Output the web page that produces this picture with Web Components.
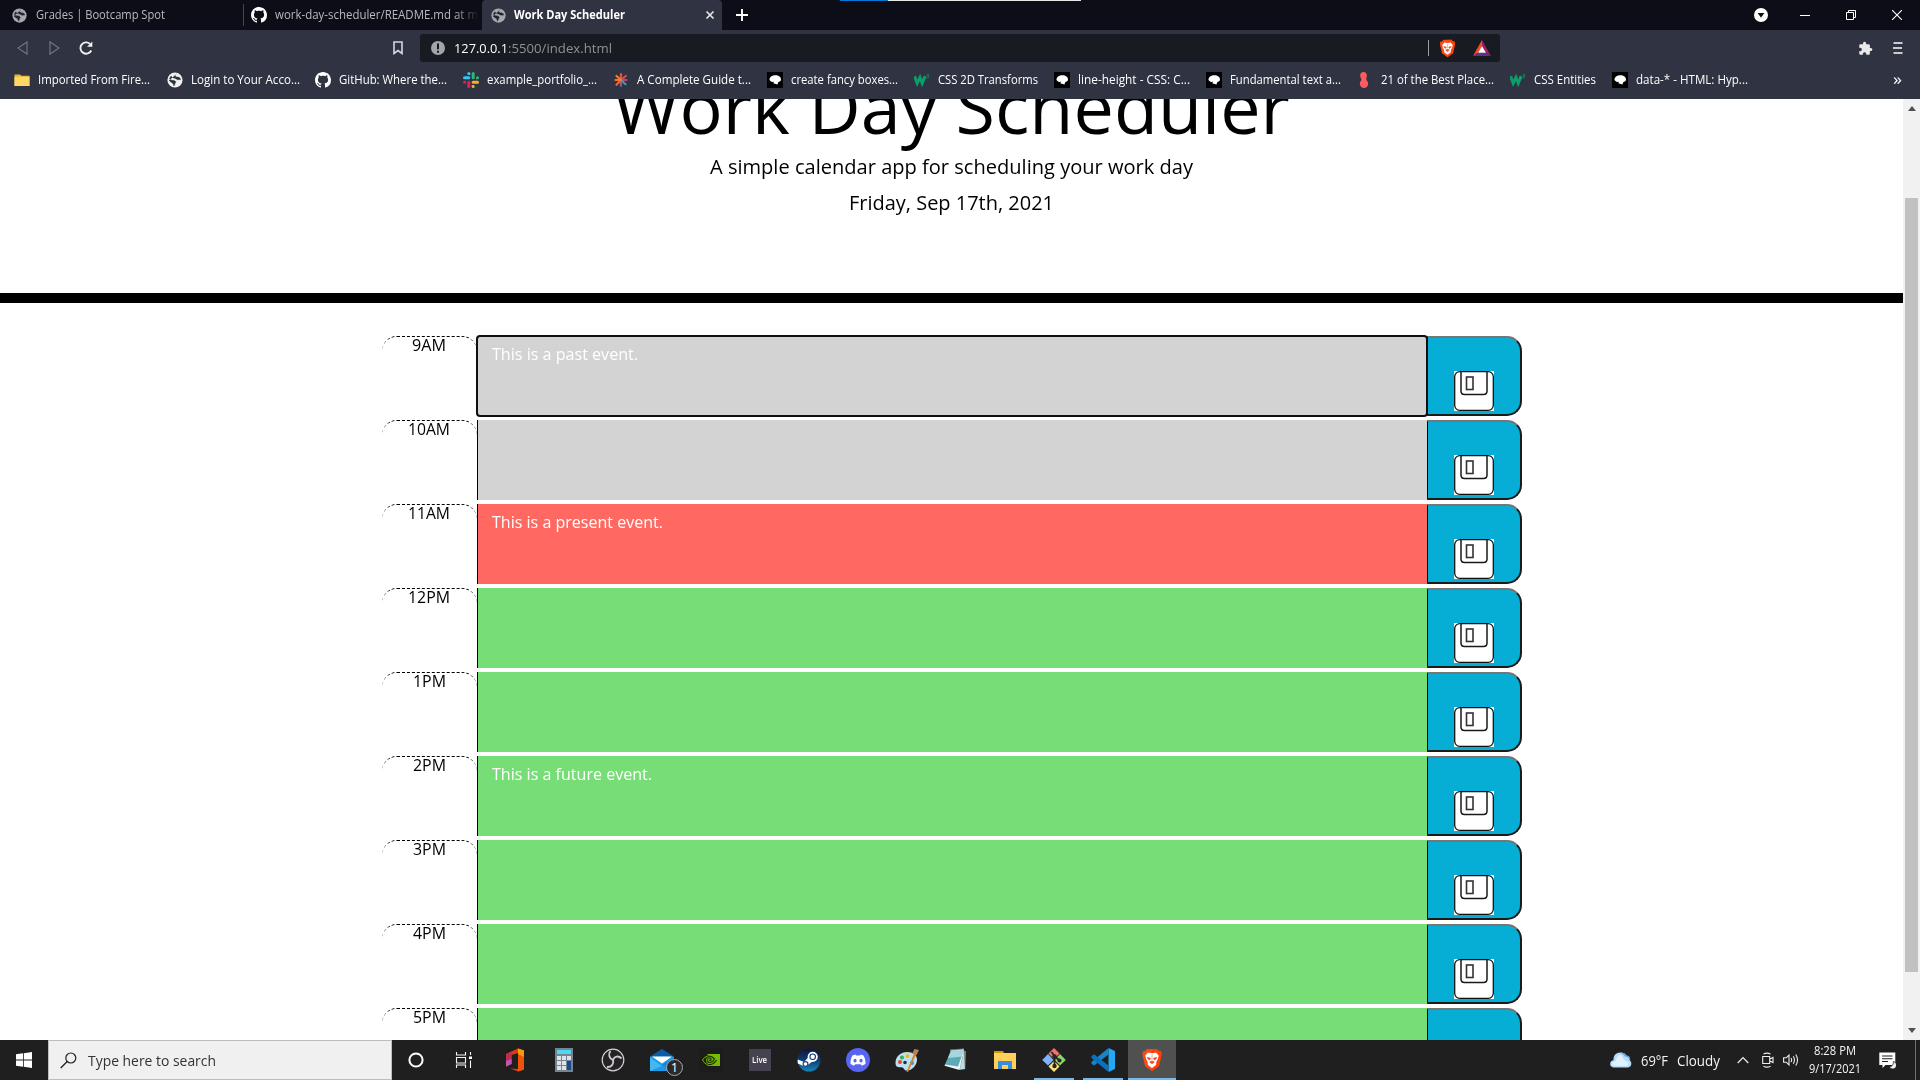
<!DOCTYPE html>
<html lang="en">
<head>
<meta charset="utf-8">
<title>Work Day Scheduler</title>
<style>
html,body{margin:0;padding:0}
body{width:1920px;height:1080px;overflow:hidden;font-family:"Open Sans","Noto Sans",sans-serif;background:#fff}
</style>
</head>
<body>
<desktop-screen></desktop-screen>
<script>
const GLOBE = (c,d) => `<svg viewBox="0 0 16 16"><circle cx="8" cy="8" r="7.600" fill="${c}"/><path d="M9.500 2C8 3.200 7.800 3.600 8.600 4.500c1 .8 3 .3 4.400 1.500l.6 1.500-3 .2C9 6.500 7 6 5.500 5.500L4 4 2.500 6.500l1 1.500 3.500.5c1.800.5 2.300 1.500 1.200 2.700L7 14l-1-2.500L3.500 9.800 2 8.500" fill="${d}" stroke="${d}" stroke-width=".4"/></svg>`;
const LION = `<svg viewBox="0 0 20 24"><path d="M5 1h10l2 2 2.200.2.300 3.800-2.500 11L10 23 3 18 .5 7l.4-3.800L3 3z" fill="#fb4a16"/><path d="M10 1h5l2 2 2.200.2.300 3.800-2.500 11L10 23z" fill="#ff3b00" opacity=".6"/><path d="M6 4.500l4 .7 4-.7 2.700 3-1 4-1.200 2-.5 3.500L10 20l-4-3-.5-3.500-1.200-2-1-4z" fill="#fff"/><path d="M5.200 9.300l3.300.8-.5 1.800-2-.7zM14.800 9.300l-3.300.8.5 1.800 2-.7zM7.500 14l2.500-1.300 2.500 1.300-2.500 2zM10 6v5.500" fill="#f0502a" stroke="#f0502a" stroke-width=".5"/></svg>`;
const ICONS = {
 globeLight: GLOBE('#f1f1f1','#2b2d39'), globeDim: GLOBE('#a6a8b0','#20222c'),
 lion: LION,
 github: `<svg viewBox="0 0 16 16"><path fill="#fff" d="M8 0C3.580 0 0 3.580 0 8c0 3.540 2.290 6.530 5.470 7.590.4.070.55-.17.55-.38 0-.19-.01-.82-.01-1.490-2.010.37-2.530-.49-2.690-.94-.09-.23-.48-.94-.82-1.130-.28-.15-.68-.52-.01-.53.630-.01 1.080.58 1.230.82.720 1.210 1.870.87 2.330.66.070-.52.280-.87.510-1.070-1.780-.2-3.640-.89-3.640-3.950 0-.87.310-1.590.82-2.150-.08-.2-.36-1.020.08-2.120 0 0 .67-.21 2.200.82.640-.18 1.320-.27 2-.27s1.360.09 2 .27c1.530-1.040 2.200-.82 2.200-.82.440 1.100.16 1.920.08 2.120.51.560.82 1.270.82 2.150 0 3.070-1.870 3.750-3.650 3.950.29.250.54.730.54 1.480 0 1.070-.01 1.930-.01 2.200 0 .21.150.46.550.38A8.010 8.010 0 0 0 16 8c0-4.420-3.580-8-8-8z"/></svg>`,
 close: `<svg viewBox="0 0 10 10"><path d="M1.500 1.500l7 7M8.500 1.500l-7 7" stroke="#e6e6e6" stroke-width="1.700"/></svg>`,
 plus: `<svg viewBox="0 0 12 12"><path d="M6 0v12M0 6h12" stroke="#fff" stroke-width="1.900"/></svg>`,
 down: `<svg viewBox="0 0 14 14"><circle cx="7" cy="7" r="7" fill="#fff"/><path d="M3.700 5h6.600L7 9.700z" fill="#0c0d16"/></svg>`,
 min: `<svg viewBox="0 0 10 10"><path d="M0 5.500h10" stroke="#fff"/></svg>`,
 restore: `<svg viewBox="0 0 10 10"><path d="M.5 2.500h7v7h-7zM2.500 2.500v-2h7v7h-2" fill="none" stroke="#fff"/></svg>`,
 wclose: `<svg viewBox="0 0 10 10"><path d="M0 0l10 10M10 0L0 10" stroke="#fff" stroke-width="1.100"/></svg>`,
 back: `<svg viewBox="0 0 11 14"><path d="M10 .9v12.200L1 7z" fill="none" stroke="#70727d" stroke-width="1.200"/></svg>`,
 fwd: `<svg viewBox="0 0 11 14"><path d="M1 .9v12.200L10 7z" fill="none" stroke="#70727d" stroke-width="1.200"/></svg>`,
 reload: `<svg viewBox="0 0 14 14"><path d="M12.300 9.500A5.700 5.700 0 1 1 11 2.800" fill="none" stroke="#f3f3f3" stroke-width="1.800"/><path d="M13.300.5v5.200H8.100z" fill="#f3f3f3"/></svg>`,
 mark: `<svg viewBox="0 0 10 14"><path d="M1 1h8v11.500L5 9.500l-4 3z" fill="none" stroke="#d6d7da" stroke-width="1.600"/></svg>`,
 info: `<svg viewBox="0 0 14 14"><circle cx="7" cy="7" r="7" fill="#a3a5aa"/><path d="M7 2.500v5.700M7 9.700v2" stroke="#171a21" stroke-width="2"/></svg>`,
 bat: `<svg viewBox="0 0 18 16"><path d="M9 0L0 16l5-3.200L9 6z" fill="#ff4724"/><path d="M9 0l9 16-5-3.200L9 6z" fill="#9e1f63"/><path d="M0 16h18l-5-3.200H5z" fill="#662d91"/><path d="M9 6l4 6.800H5z" fill="#fff"/></svg>`,
 puzzle: `<svg viewBox="0 0 24 24"><path fill="#e9e9eb" d="M20.500 11H19V7a2 2 0 0 0-2-2h-4V3.500a2.500 2.500 0 0 0-5 0V5H4a2 2 0 0 0-2 2v3.800h1.500a2.700 2.700 0 0 1 0 5.400H2V20a2 2 0 0 0 2 2h3.800v-1.500a2.700 2.700 0 0 1 5.400 0V22H17a2 2 0 0 0 2-2v-4h1.500a2.500 2.500 0 0 0 0-5z"/></svg>`,
 menu: `<svg viewBox="0 0 10 12"><path d="M.5 1h9M0 6h9M.5 11h9" stroke="#c9cacd" stroke-width="1.800"/></svg>`,
 folder: `<svg viewBox="0 0 16 16"><path d="M.5 2.500H6l1.500 1.300H15.500V14h-15z" fill="#eab431"/><path d="M.5 4.800h15V14h-15z" fill="#ffd766"/></svg>`,
 slack: `<svg viewBox="0 0 16 16"><g fill="#36c5f0"><rect x="0" y="4.300" width="7.300" height="3" rx="1.500"/><path d="M5.800 0a1.500 1.500 0 0 1 1.500 1.500V3H5.800a1.500 1.500 0 0 1 0-3z"/></g><g fill="#2eb67d"><rect x="8.700" y="0" width="3" height="7.300" rx="1.500"/><path d="M16 5.800a1.500 1.500 0 0 1-1.500 1.500H13V5.800a1.500 1.500 0 0 1 3 0z"/></g><g fill="#ecb22e"><rect x="8.700" y="8.700" width="7.300" height="3" rx="1.500"/><path d="M10.200 16a1.500 1.500 0 0 1-1.500-1.500V13h1.500a1.500 1.500 0 0 1 0 3z"/></g><g fill="#e01e5a"><rect x="4.300" y="8.700" width="3" height="7.300" rx="1.500"/><path d="M0 10.200a1.500 1.500 0 0 1 1.500-1.500H3v1.500a1.500 1.500 0 0 1-3 0z"/></g></svg>`,
 star: `<svg viewBox="0 0 16 16"><g stroke-width="2.200" stroke-linecap="round"><path d="M8 8V2.200" stroke="#e0524c"/><path d="M8 8l4.800-4" stroke="#d84a52"/><path d="M8 8h5.600" stroke="#b34a6a"/><path d="M8 8l4.500 4.300" stroke="#4d8fb8"/><path d="M8 8v5.800" stroke="#8b5c86"/><path d="M8 8l-4.500 4.800" stroke="#f1623b"/><path d="M8 8H2.500" stroke="#ff6d2a"/><path d="M8 8L3.500 4" stroke="#ff7a18"/></g></svg>`,
 mdn: `<svg viewBox="0 0 16 16"><path d="M0 0h16v16H0z" fill="#000"/><path d="M2.500 8C2.300 5 5 3.200 8.500 3.200c3.200 0 5.500 1.800 5.500 4.300 0 1.300-.8 2.200-2.200 2.300-.8.700-1 1.700-1.300 2.700L6.300 11.300 7 9.800l-2 .2-1.300-.8z" fill="#fff"/></svg>`,
 w3: `<svg viewBox="0 0 16 16"><path d="M.6 4.200l2.600 7L6 5.500l2.200 5.700 3-7" fill="none" stroke="#0b9e6b" stroke-width="3"/><path d="M12.600 2.800h2.200l-1.200 1.400c1.600.2 1.500 2-.9 1.700" fill="none" stroke="#0b9e6b" stroke-width=".8"/></svg>`,
 red: `<svg viewBox="0 0 16 16"><ellipse cx="6.500" cy="3.600" rx="3.300" ry="3.600" fill="#ff5a5f"/><path d="M4.300 4h5v5h-5z" fill="#ff5a5f"/><ellipse cx="7" cy="11.800" rx="4.200" ry="4.200" fill="#ff5a5f"/></svg>`,
 disk: `<svg viewBox="0 0 40 40"><path d="M0 0h40v40H0z" fill="#fff"/><rect x=".7" y=".7" width="38.600" height="38.600" rx="5" fill="#fff" stroke="#111" stroke-width="1.300"/><path d="M7 .8V20q0 3.500 3.500 3.500h19q3.500 0 3.500-3.500V.8" fill="none" stroke="#191919" stroke-width="1.500"/><rect x="12.500" y="6" width="6.500" height="12.500" fill="none" stroke="#333" stroke-width="1.600"/></svg>`,
 win: `<svg viewBox="0 0 16 16"><path d="M0 2.300l7-1V7.600H0zM7.800 1.200L16 0v7.600H7.800zM0 8.400h7v6.300l-7-1zM7.800 8.400H16V16l-8.200-1.200z" fill="#fff"/></svg>`,
 search: `<svg viewBox="0 0 17 17"><circle cx="10.800" cy="6" r="5" fill="none" stroke="#222" stroke-width="1.200"/><path d="M7.200 9.500L.7 16" stroke="#222" stroke-width="1.300"/></svg>`,
 cortana: `<svg viewBox="0 0 24 24"><circle cx="12" cy="12" r="6.600" fill="none" stroke="#fff" stroke-width="2"/></svg>`,
 tasks: `<svg viewBox="0 0 24 24"><path d="M4.500 4v3h9V4M4.500 20v-3h9v3M4.500 9.500h9v5.500h-9zM18.500 4v3M18.500 12.500V20" fill="none" stroke="#f5f5f5" stroke-width="1.100"/><path d="M17 8.500h3v2.500h-3z" fill="#fff"/></svg>`,
 office: `<svg viewBox="0 0 24 24"><path d="M15 .5l6 2v19l-6 2-8-3 8 .6V5L8.500 7v9L3 18.500V6z" fill="#e23a12"/><path d="M15 .5l6 2v19l-6 2z" fill="#ee5307"/><path d="M15 .5l6 2V9l-6-3z" fill="#f79a0a"/><path d="M3 6l5.500-2.500V16L3 18.500z" fill="#c22c4c"/><path d="M3 13l5.500-2v5L3 18.500z" fill="#b55ab8"/></svg>`,
 calc: `<svg viewBox="0 0 24 24"><path d="M3 0h18v24H3z" fill="#77838f"/><path d="M5 2h14v4H5z" fill="#4bd8f8"/><path d="M5 8h4v4H5zM10 8h4v4h-4zM15 8h4v4h-4zM5 13h4v4H5zM10 13h4v4h-4zM5 18h4v4H5zM10 18h4v4h-4z" fill="#dce2e8"/><path d="M15 13h4v9h-4z" fill="#134a8e"/></svg>`,
 obs: `<svg viewBox="0 0 24 24"><circle cx="12" cy="12" r="10.800" fill="#262326" stroke="#d0d0d0" stroke-width="1.200"/><path d="M9.500 3C7 6 8 10.500 12 12M12 12c1.500-4 5.500-4.500 8.500-1.500M12 12c1 4-1.500 7.500-6 7" fill="none" stroke="#c9c9c9" stroke-width="1.900"/></svg>`,
 mail: `<svg viewBox="0 0 24 24"><path d="M0 8.500L12 1l12 7.500z" fill="#0a5ca8"/><path d="M0 8.500h24V23H0z" fill="#1c9bea"/><path d="M2 8.500h20L12 15.500z" fill="#fff"/><path d="M0 9.500L12 18 0 23z" fill="#41b7f4"/><path d="M24 9.500L12 17l12 6z" fill="#1683d8"/></svg>`,
 nvidia: `<svg viewBox="0 0 24 24"><path d="M0 0h24v24H0z" fill="#1c1c1c"/><path d="M8.500 6H21v12H8.500z" fill="#76b900"/><path d="M3.500 11.800C6.500 7.500 12 6.800 15.500 11c-2 4-6.500 5-8 .8.8-2.300 3.500-2.800 4.800-.3-1 1.700-2 1.500-2.300.2M3.500 11.800c2.500 5.700 9.500 7 14 .4" fill="none" stroke="#203600" stroke-width="1.200"/><path d="M8.500 8.200c-2 .6-4 2-5 3.600 1 2.200 3 4.200 5 4.900M8.500 10c-2 1.500-.8 4.500 0 4.800" fill="none" stroke="#76b900"/></svg>`,
 steam: `<svg viewBox="0 0 24 24"><defs><linearGradient id="g" x2="0" y2="1"><stop stop-color="#10153c"/><stop offset=".5" stop-color="#0c3c72"/><stop offset="1" stop-color="#1785bb"/></linearGradient></defs><circle cx="12" cy="12" r="11.500" fill="url(#g)"/><path d="M.6 11.500l6.500 2.500 4.500-5 8 1-7.500 6-4 2.800L.8 15.500z" fill="#fff"/><circle cx="15.700" cy="8.800" r="4.200" fill="#12376c" stroke="#fff" stroke-width="1.800"/><circle cx="15.700" cy="8.800" r="2.200" fill="#fff"/><circle cx="8.500" cy="16" r="2.400" fill="#fff" stroke="#194d80" stroke-width="1.200"/></svg>`,
 discord: `<svg viewBox="0 0 24 24"><circle cx="12" cy="12" r="12" fill="#5865f2"/><path fill="#fff" fill-rule="evenodd" d="M9.500 6.500l.5 1h4l.5-1 3 1c1.500 2.500 2.200 5.500 2 8.500l-3.700 1.700-1-1.500h-5.600l-1 1.500L4.500 16c-.2-3 .5-6 2-8.500zM9 10.800a1.600 1.800 0 1 0 .1 0zM15 10.800a1.600 1.800 0 1 0 .1 0z"/></svg>`,
 paint: `<svg viewBox="0 0 24 24"><path d="M12 4c6 0 10 3 10 7.500 0 6-5 11-10 11-3.500 0-3-3.500-5.500-3.300C3 19.500.5 19 .5 15 .5 8 6 4 12 4z" fill="#bde0ef"/><circle cx="5" cy="14" r="2" fill="#e2453c"/><circle cx="7" cy="9.500" r="2" fill="#3aaa54"/><circle cx="12.500" cy="8" r="2" fill="#f2b41f"/><circle cx="10" cy="14.500" r="1.800" fill="#203145"/><circle cx="17" cy="15" r="2" fill="#3f8be0"/><path d="M19.500 4.500l2 1.300L13 24h-1.500z" fill="#d9822b"/><path d="M17.500 5l2-4 4.500 1-2.500 5z" fill="#b98356"/></svg>`,
 notes: `<svg viewBox="0 0 24 24"><path d="M19 2.500l3 .7-.8 18L18 21z" fill="#8d8672"/><path d="M7 2.500l13-1-3.500 20L.8 17z" fill="#5fa9b6"/><path d="M7 2.500l13-1-1.200 7L4 10z" fill="#a4d6de"/><path d="M20 2l-4.500 20L.5 17.800l.5-1.300 13 2z" fill="#e8f4f5"/><path d="M19.800 4l1 17-5 .8z" fill="#b9dfe4"/><path d="M6.500 2.300l13.500-1" stroke="#e4e4e4" stroke-dasharray="1 1" stroke-width="1.600"/></svg>`,
 explorer: `<svg viewBox="0 0 24 24"><path d="M1 3h9l1 2H1z" fill="#d99406"/><path d="M1 5h22v16H1z" fill="#ffd05a"/><path d="M5 21v-8h14v8h-4v-4H9v4z" fill="#398de0"/></svg>`,
 git: `<svg viewBox="0 0 24 24"><path d="M12 0l5.500 5.500L12 11 6.500 5.500z" fill="#f27071"/><path d="M6 6l5.500 6L6 17.500.2 12z" fill="#80b3ff"/><path d="M18 6l5.800 6-5.800 5.500-5.500-5.500z" fill="#8bd46b"/><path d="M12 13l5.500 5.500L12 24l-5.500-5.500z" fill="#ffe27a"/><path d="M9.500 4l3 4v11M12.500 8l5 4.500" fill="none" stroke="#292421" stroke-width="1.800"/><circle cx="12.500" cy="8.500" r="2.200" fill="#292421"/><circle cx="17.500" cy="12.500" r="2" fill="#292421"/><circle cx="12.500" cy="18" r="2.200" fill="#292421"/></svg>`,
 vscode: `<svg viewBox="0 0 24 24"><path d="M17.500 0L24 3v18l-6.500 3z" fill="#25a9f2"/><path d="M17.500 0v6.500L3 17.500.5 15.800V14z" fill="#1685cc"/><path d="M17.500 24v-6.500L3 6.300.5 8v2z" fill="#0c71bd"/></svg>`,
 cloud: `<svg viewBox="0 0 22 16"><path d="M5 15.500C1 15.500 0 13.500.2 11.500 .5 9 2 8.300 3.500 8.200 3.200 3.500 6 .5 10.500.5c3 0 5 1 5.800 3C20 3.800 20.500 7 20 8.500c2 1.500 2 6.500-2 7z" fill="#b5def9"/><path d="M6 14C3 14 1.500 13 2 11c1-2 3-1 4-2.500C6.300 5 8 3 11 3l3 5 4 2c1 2 0 4-2 4z" fill="#e0f2fe"/><path d="M10.500.5c3 0 5 1 5.800 3C20 3.800 20.500 7 20 8.500l-1-.5c0-2-1-3.500-4-3.500-1-2-3-2.500-4.500-4z" fill="#5a9ee8"/></svg>`,
 caret: `<svg viewBox="0 0 12 8"><path d="M.7 7L6 1.500 11.300 7" fill="none" stroke="#f1f1f1" stroke-width="1.200"/></svg>`,
 meet: `<svg viewBox="0 0 12 16"><path d="M1.500 2Q5 .2 8.500 2M1.500 14.200Q5 16 8.500 14.200M.7 4.500h7v7h-7zM8 7l3-1.500v5L8 9" fill="none" stroke="#eee" stroke-width="1.100"/></svg>`,
 sound: `<svg viewBox="0 0 17 14"><path d="M.6 4.800h2.600L6 2v10L3.200 9.200H.6zM8 5q1.300 2 0 4M10.300 3.300q2.300 3.700 0 7.400M12.700 1.500q3.700 5.500 0 11" fill="none" stroke="#eee" stroke-width="1.100"/></svg>`,
 action: `<svg viewBox="0 0 17 17"><path d="M.3.500h16v12.500H6.500L3.500 16v-3H.3z" fill="#fff"/><path d="M3 4h10.500M3 6.700h10.500M3 9.500h6" stroke="#1e1e1e" stroke-width="1.100"/><path d="M14.500 9.500a3.800 3.800 0 1 1-4.300 5c2.500.5 4.300-2 4.300-5z" fill="#eee" stroke="#1e1e1e" stroke-width=".8"/></svg>`
};
class BaseEl extends HTMLElement{
  connectedCallback(){
    if(this.shadowRoot) return;
    this.attachShadow({mode:'open'}).innerHTML=this.render();
    this.ready&&this.ready();
  }
  a(n,d=''){return this.hasAttribute(n)?this.getAttribute(n):d}
}
const def=(n,c)=>customElements.define(n,c);

/* Icon: name, w, h */
def('ui-icon',class extends BaseEl{render(){
  const w=this.a('w','16'),h=this.a('h',w);
  return `<style>:host{display:block;flex:none;width:${w}px;height:${h}px}svg{display:block;width:100%;height:100%}</style>${ICONS[this.a('name')]}`;
}});
/* Single text line that occupies exactly w pixels */
def('fit-text',class extends BaseEl{render(){
  return `<style>:host{display:block;flex:none;white-space:nowrap;width:${this.a('w')}px}span{display:inline-block;transform-origin:0 50%}</style><span><slot></slot></span>`;
}ready(){
  const s=this.shadowRoot.querySelector('span');
  const n=s.getBoundingClientRect().width;
  if(n) s.style.transform=`scaleX(${(+this.a('w')/n).toFixed(4)})`;
}});
def('gap-x',class extends BaseEl{render(){return `<style>:host{display:block;flex:none;width:${this.a('w')}px}</style>`}});

def('tab-strip',class extends BaseEl{render(){return `<style>
 :host{display:flex;height:30px;background:#0c0d16;align-items:center;color:#b9bac0;font-size:12px;line-height:16px}
 .sep{width:1px;height:22px;background:#44464f}
 .active{display:flex;align-items:center;width:240px;height:30px;background:#303341;border-radius:4px 4px 0 0;color:#fff;font-weight:700}
 .fade{width:204px;-webkit-mask-image:linear-gradient(90deg,#000 88%,transparent);overflow:hidden}
 .load{align-self:flex-start;display:flex;width:241px;height:1px;background:linear-gradient(90deg,#0078d7 48px,#e8e8e8 48px)}
 .end{display:flex;align-items:center;margin-left:auto;padding-right:18px;height:28px}
 </style>
 <gap-x w="12"></gap-x><ui-icon name="globeDim" w="15"></ui-icon><gap-x w="9"></gap-x><fit-text w="129">Grades | Bootcamp Spot</fit-text><gap-x w="78"></gap-x><div class="sep"></div>
 <gap-x w="7"></gap-x><ui-icon name="github" w="16"></ui-icon><gap-x w="8"></gap-x><div class="fade"><fit-text w="203">work-day-scheduler/README.md at m</fit-text></div><gap-x w="3"></gap-x>
 <div class="active"><gap-x w="9"></gap-x><ui-icon name="globeDim" w="15"></ui-icon><gap-x w="8"></gap-x><fit-text w="111">Work Day Scheduler</fit-text><gap-x w="80"></gap-x><ui-icon name="close" w="10"></ui-icon></div>
 <gap-x w="14"></gap-x><ui-icon name="plus" w="12"></ui-icon><gap-x w="92"></gap-x><div class="load"></div>
 <div class="end"><ui-icon name="down" w="14"></ui-icon><gap-x w="32"></gap-x><ui-icon name="min" w="10"></ui-icon><gap-x w="36"></gap-x><ui-icon name="restore" w="10"></ui-icon><gap-x w="36"></gap-x><ui-icon name="wclose" w="10"></ui-icon></div>`}});

def('address-bar',class extends BaseEl{render(){return `<style>
 :host{display:flex;height:36px;align-items:center;background:#303341;font-size:13px;line-height:18px}
 .url{display:flex;align-items:center;width:1080px;height:28px;border-radius:3px;background:#181b22;color:#fff;box-sizing:border-box}
 .dim{color:#8f9196}.div{width:1px;height:16px;background:#9a9ca2;margin-left:816px}
 .end{display:flex;align-items:center;margin-left:auto;padding-right:17px}
 </style>
 <gap-x w="17"></gap-x><ui-icon name="back" w="11" h="14"></ui-icon><gap-x w="21"></gap-x><ui-icon name="fwd" w="11" h="14"></ui-icon><gap-x w="19"></gap-x><ui-icon name="reload" w="14"></ui-icon><gap-x w="300"></gap-x><ui-icon name="mark" w="10" h="14"></ui-icon><gap-x w="17"></gap-x>
 <div class="url"><gap-x w="11"></gap-x><ui-icon name="info" w="14"></ui-icon><gap-x w="9"></gap-x><fit-text w="54">127.0.0.1</fit-text><fit-text class="dim" w="104">:5500/index.html</fit-text><div class="div"></div><gap-x w="10"></gap-x><ui-icon name="lion" w="17" h="19"></ui-icon><gap-x w="17"></gap-x><ui-icon name="bat" w="18" h="16"></ui-icon></div>
 <div class="end"><ui-icon name="puzzle" w="15"></ui-icon><gap-x w="20"></gap-x><ui-icon name="menu" w="10" h="12"></ui-icon></div>`}});

def('book-mark',class extends BaseEl{render(){return `<style>:host{display:flex;flex:none;align-items:center;gap:8px;width:${this.a('w')}px}</style><ui-icon name="${this.a('icon')}"></ui-icon><fit-text w="${this.a('t')}">${this.a('label')}</fit-text>`}});
def('bookmark-bar',class extends BaseEl{render(){
 const L=[['folder','Imported From Fire...',153,112],['globeLight','Login to Your Acco...',148,109],['github','GitHub: Where the...',148,108],['slack','example_portfolio_...',150,110],['star','A Complete Guide t...',154,114],['mdn','create fancy boxes...',147,107],['w3','CSS 2D Transforms',140,100],['mdn','line-height - CSS: C...',152,112],['mdn','Fundamental text a...',151,111],['red','21 of the Best Place...',153,113],['w3','CSS Entities',102,62],['mdn','data-* - HTML: Hyp...',160,112]];
 return `<style>:host{display:flex;box-sizing:border-box;height:33px;padding:0 18px 5px 13.500px;align-items:center;background:#303341;color:#fff;font-size:12px;line-height:18px}fit-text.m{margin-left:auto;font-size:17px;line-height:14px;padding-bottom:3px}</style>${L.map(([i,l,w,t])=>`<book-mark icon="${i}" label="${l}" w="${w}" t="${t}"></book-mark>`).join('')}<fit-text class="m" w="9">»</fit-text>`}});

def('page-header',class extends BaseEl{render(){return `<style>
 :host{display:flex;flex-direction:column;align-items:center;height:194px;border-bottom:10px solid #000;color:#000;font-size:20px;font-weight:400;line-height:30px}
 h1{margin:-36px 0 0;font-size:72px;font-weight:400;line-height:86px}
 p{margin:3px 0 0}p+p{margin-top:6px}
 </style><h1><fit-text w="677">Work Day Scheduler</fit-text></h1><p><fit-text w="483">A simple calendar app for scheduling your work day</fit-text></p><p><fit-text w="205">Friday, Sep 17th, 2021</fit-text></p>`}});

def('time-block',class extends BaseEl{render(){
 const c={past:'#d3d3d3',present:'#ff6961',future:'#77dd77'}[this.a('state')];
 return `<style>
 :host{display:flex;height:80px;margin-bottom:4px;width:1140px;flex:none}
 .hour{width:95px;box-sizing:border-box;border-top:1px dashed #000;border-radius:15px;text-align:center;font-size:16px;line-height:16px;color:#000;display:flex;justify-content:center}
 .event{width:950px;box-sizing:border-box;border-left:1px solid #000;background:${c};color:#fff;font-size:16px;line-height:24px;padding:6px 14.500px}
 :host([focused]) .event{outline:2px solid #101010;outline-offset:-1px;border-radius:3px;position:relative;z-index:1}
 .save{display:flex;align-items:flex-end;width:95px;box-sizing:border-box;background:#06aed5;border:2px solid;border-color:#767676 #1b1b1b #1b1b1b #1b1b1b;border-left:1px solid #000;border-radius:0 15px 15px 0;padding:0 0 3px 26px}
 </style><div class="hour"><fit-text w="${this.a('hw')}">${this.a('hour')}</fit-text></div><div class="event">${this.a('tw')?`<fit-text w="${this.a('tw')}"><slot></slot></fit-text>`:''}</div><div class="save"><ui-icon name="disk" w="40"></ui-icon></div>`}
});
def('scroll-bar',class extends BaseEl{render(){return `<style>
 :host{display:flex;flex-direction:column;width:17px;background:#f1f1f1;align-items:center}
 i{width:0;border:4px solid transparent}.u{border-top:0;border-bottom:5px solid #505050;margin-top:7px}.d{border-bottom:0;border-top:5px solid #505050;margin:auto 0 7px}
 b{width:13px;height:774px;background:#c1c1c1;margin-top:87px}
 </style><i class="u"></i><b></b><i class="d"></i>`}});
def('web-page',class extends BaseEl{render(){
 const R=[['9AM','past',34,'This is a past event.',146],['10AM','past',42],['11AM','present',42,'This is a present event.',171],['12PM','future',42],['1PM','future',33],['2PM','future',33,'This is a future event.',160],['3PM','future',33],['4PM','future',33],['5PM','future',33]];
 return `<style>:host{display:flex;height:941px;overflow:hidden;background:#fff}
 main{width:1903px;height:941px;overflow:hidden}
 .list{display:flex;flex-direction:column;align-items:center;padding-top:33px}</style>
 <main><page-header></page-header><div class="list">${R.map((r,i)=>`<time-block hour="${r[0]}" state="${r[1]}" hw="${r[2]}" ${r[4]?`tw="${r[4]}"`:''} ${i?'':'focused'}>${r[3]||''}</time-block>`).join('')}</div></main><scroll-bar></scroll-bar>`}});

def('task-button',class extends BaseEl{render(){
 const n=this.a('name'),run=this.a('run');
 const body=n==='live'?'<div class="live"><fit-text w="15">Live</fit-text></div>':`<ui-icon name="${n}" w="${this.a('w','24')}" h="24"></ui-icon>`;
 return `<style>:host{display:flex;flex:none;width:${this.a('cell','49')}px;height:40px;align-items:center;justify-content:center;box-sizing:border-box;position:relative}
 :host([active]){background:#505050}
 .live{width:22px;height:22px;background:#46424f;display:flex;align-items:center;justify-content:center;color:#fff;font-size:9px;font-weight:600;line-height:12px}
 .bar{position:absolute;left:${this.a('active')?0:4}px;bottom:0;height:2px;width:${run}px;background:#76b9ed}
 .badge{position:absolute;left:29px;top:19px;width:15px;height:15px;border:1px solid #aaa;border-radius:50%;background:#2a2a2a;color:#fff;font-size:13px;line-height:15px;text-align:center}
 </style>${body}${run?'<div class="bar"></div>':''}${this.a('badge')?`<div class="badge">${this.a('badge')}</div>`:''}`}});
def('task-bar',class extends BaseEl{render(){return `<style>
 :host{display:flex;height:40px;background:#1f1f1f;align-items:center;color:#f5f5f5}
 .start{width:48px;display:flex;justify-content:center}
 .search{display:flex;align-items:center;width:344px;height:40px;box-sizing:border-box;background:#f0f0f0;border:1px solid #bdbdbd;color:#333;font-size:15px;line-height:20px;padding-left:11px}
 .tray{display:flex;align-items:center;margin-left:auto;height:40px;font-size:15px;line-height:18px}
 .clock{display:flex;flex-direction:column;align-items:center;width:52px;font-size:12px;line-height:18px}
 .edge{width:1px;height:40px;background:#707070;margin:0 4px 0 19px}
 </style>
 <div class="start"><ui-icon name="win" w="16"></ui-icon></div>
 <div class="search"><ui-icon name="search" w="17"></ui-icon><gap-x w="11"></gap-x><fit-text w="128">Type here to search</fit-text></div>
 <task-button name="cortana" cell="48"></task-button><task-button name="tasks" cell="48"></task-button><gap-x w="2"></gap-x><task-button name="office"></task-button><task-button name="calc"></task-button><task-button name="obs"></task-button><task-button name="mail" badge="1"></task-button><task-button name="nvidia"></task-button><task-button name="live"></task-button><task-button name="steam"></task-button><task-button name="discord"></task-button><task-button name="paint"></task-button><task-button name="notes"></task-button><task-button name="explorer"></task-button><gap-x w="1"></gap-x><task-button name="git" run="40" cell="48"></task-button><gap-x w="1"></gap-x><task-button name="vscode" run="40" cell="48"></task-button><gap-x w="1"></gap-x><task-button name="lion" w="20" run="48" cell="48" active="1"></task-button>
 <div class="tray"><ui-icon name="cloud" w="22" h="16"></ui-icon><gap-x w="9"></gap-x><fit-text w="27">69°F</fit-text><gap-x w="9"></gap-x><fit-text w="43">Cloudy</fit-text><gap-x w="17"></gap-x><ui-icon name="caret" w="12" h="8"></ui-icon><gap-x w="13"></gap-x><ui-icon name="meet" w="12" h="16"></ui-icon><gap-x w="9"></gap-x><ui-icon name="sound" w="17" h="14"></ui-icon><gap-x w="9"></gap-x>
 <div class="clock"><fit-text w="42">8:28 PM</fit-text><fit-text w="52">9/17/2021</fit-text></div><gap-x w="18"></gap-x><ui-icon name="action" w="17"></ui-icon><div class="edge"></div></div>`}});
def('desktop-screen',class extends BaseEl{render(){return `<style>:host{display:flex;flex-direction:column;width:1920px;height:1080px}</style><tab-strip></tab-strip><address-bar></address-bar><bookmark-bar></bookmark-bar><web-page></web-page><task-bar></task-bar>`}});
</script>
</body>
</html>
